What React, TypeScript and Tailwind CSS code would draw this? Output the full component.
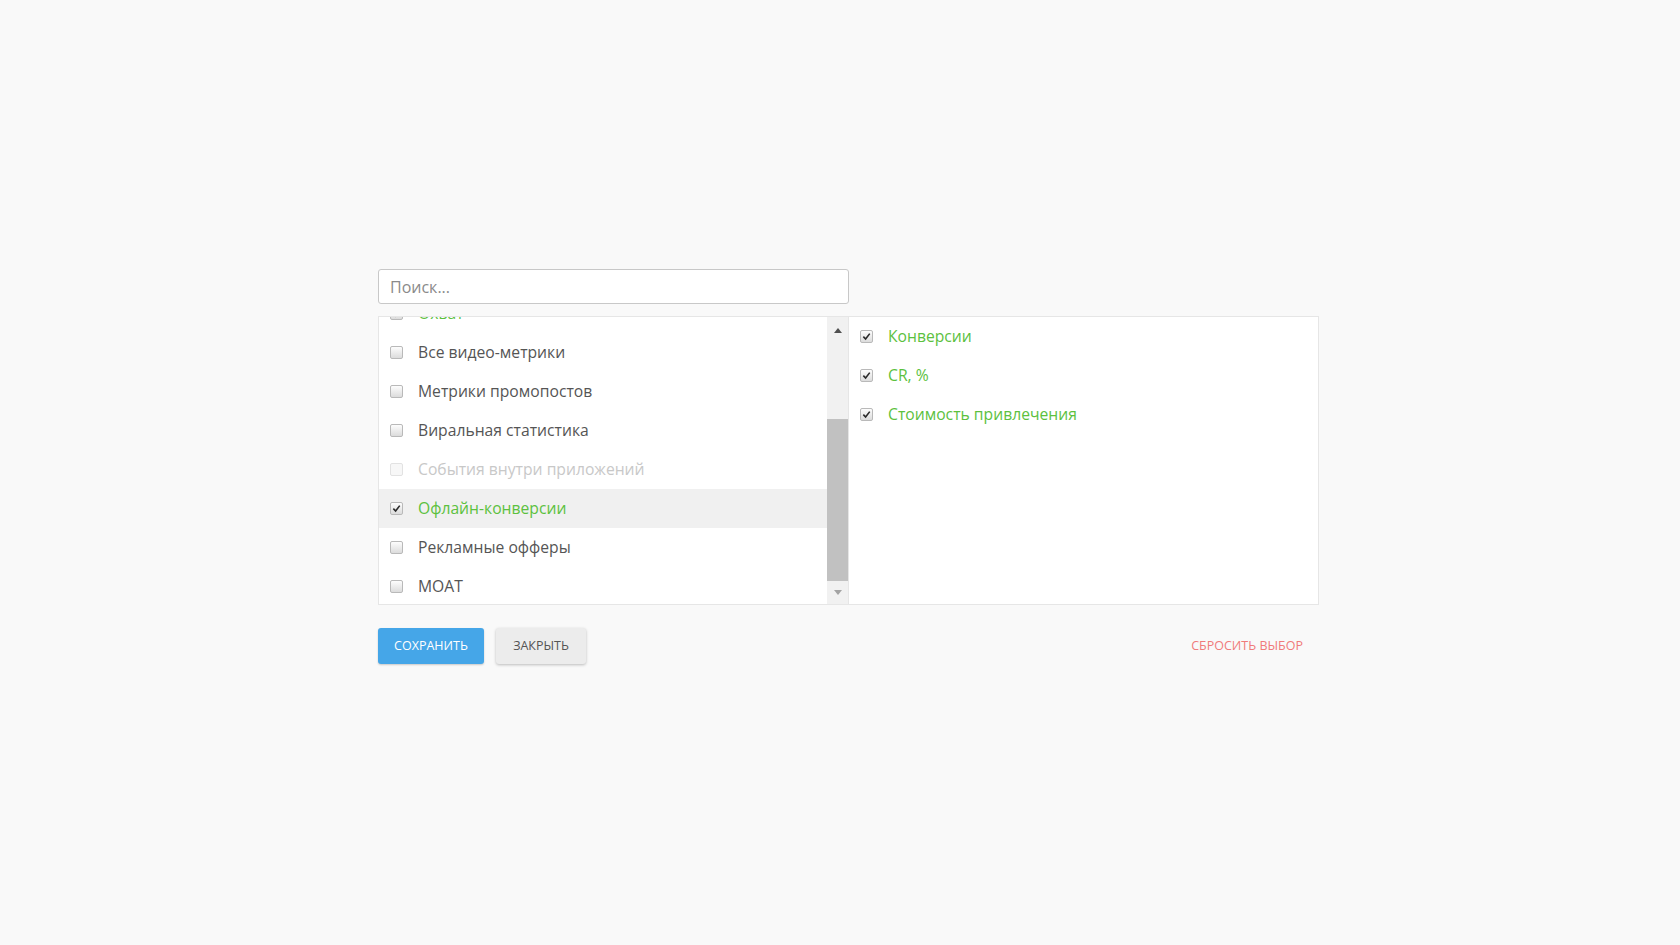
const available = [
  { label: "Охват", checked: true },
  { label: "Все видео-метрики" },
  { label: "Метрики промопостов" },
  { label: "Виральная статистика" },
  { label: "События внутри приложений", disabled: true },
  { label: "Офлайн-конверсии", checked: true, hover: true },
  { label: "Рекламные офферы" },
  { label: "MOAT" },
];

const selected = ["Конверсии", "CR, %", "Стоимость привлечения"];

function Checkbox({ checked, disabled }: { checked?: boolean; disabled?: boolean }) {
  return (
    <span
      className={`flex h-[13px] w-[13px] shrink-0 items-center justify-center rounded-[2px] border ${
        disabled
          ? "border-[#e2e2e2] bg-[#f7f7f7]"
          : "border-[#b9b9b9] bg-gradient-to-b from-[#fdfdfd] to-[#dcdcdc]"
      }`}
    >
      {checked && (
        <svg viewBox="0 0 10 10" className="h-[9px] w-[9px]">
          <path d="M1.5 5.2 L4 7.8 L8.6 1.8" fill="none" stroke="#2b2b2b" strokeWidth="1.8" />
        </svg>
      )}
    </span>
  );
}

function Row({
  label,
  checked,
  disabled,
  hover,
}: {
  label: string;
  checked?: boolean;
  disabled?: boolean;
  hover?: boolean;
}) {
  return (
    <div className={`flex h-[39px] items-center gap-[15px] pl-[11px] ${hover ? "bg-[#f0f0f0]" : ""}`}>
      <Checkbox checked={checked} disabled={disabled} />
      <span
        className={`text-[15.7px] ${
          disabled ? "text-[#c8c8c8]" : checked ? "text-[#5cc13e]" : "text-[#555555]"
        }`}
      >
        {label}
      </span>
    </div>
  );
}

export default function App() {
  return (
    <div className="min-h-[945px] bg-[#f9f9f9] font-['Open_Sans',sans-serif]">
      <div className="ml-[378px] flex w-[941px] flex-col pt-[269px]">
        <input
          placeholder="Поиск..."
          className="h-[35px] w-[471px] rounded-[3px] border border-[#c8c8c8] bg-white px-[11px] text-[16px] text-[#555] placeholder:text-[#8a8a8a] outline-none"
        />

        <div className="mt-[12px] flex h-[289px] border border-[#e6e6e6] bg-white">
          <div className="flex w-[470px] border-r border-[#e6e6e6]">
            <div className="flex-1 overflow-hidden">
              <div className="-mt-[23px]">
                {available.map((item) => (
                  <Row key={item.label} {...item} />
                ))}
              </div>
            </div>
            <div className="flex w-[21px] flex-col bg-[#f1f1f1]">
              <div className="flex h-[26px] items-center justify-center">
                <span className="h-0 w-0 border-x-[4px] border-b-[5px] border-x-transparent border-b-[#505050]" />
              </div>
              <div className="h-[76px]" />
              <div className="h-[162px] bg-[#c1c1c1]" />
              <div className="flex flex-1 items-center justify-center">
                <span className="h-0 w-0 border-x-[4px] border-t-[5px] border-x-transparent border-t-[#a3a3a3]" />
              </div>
            </div>
          </div>
          <div className="flex-1">
            {selected.map((label) => (
              <Row key={label} label={label} checked />
            ))}
          </div>
        </div>

        <div className="mt-[23px] flex items-center">
          <button className="h-[36px] w-[106px] rounded-[3px] bg-[#45a6e8] text-[12.5px] uppercase text-white shadow-[0_1px_2px_rgba(0,0,0,0.2)]">
            Сохранить
          </button>
          <button className="ml-[12px] h-[36px] w-[90px] rounded-[3px] bg-[#ececec] text-[12.5px] uppercase text-[#555] shadow-[0_1px_3px_rgba(0,0,0,0.25)]">
            Закрыть
          </button>
          <button className="ml-auto mr-[16px] text-[12.5px] uppercase text-[#f07b7b]">
            Сбросить выбор
          </button>
        </div>
      </div>
    </div>
  );
}
